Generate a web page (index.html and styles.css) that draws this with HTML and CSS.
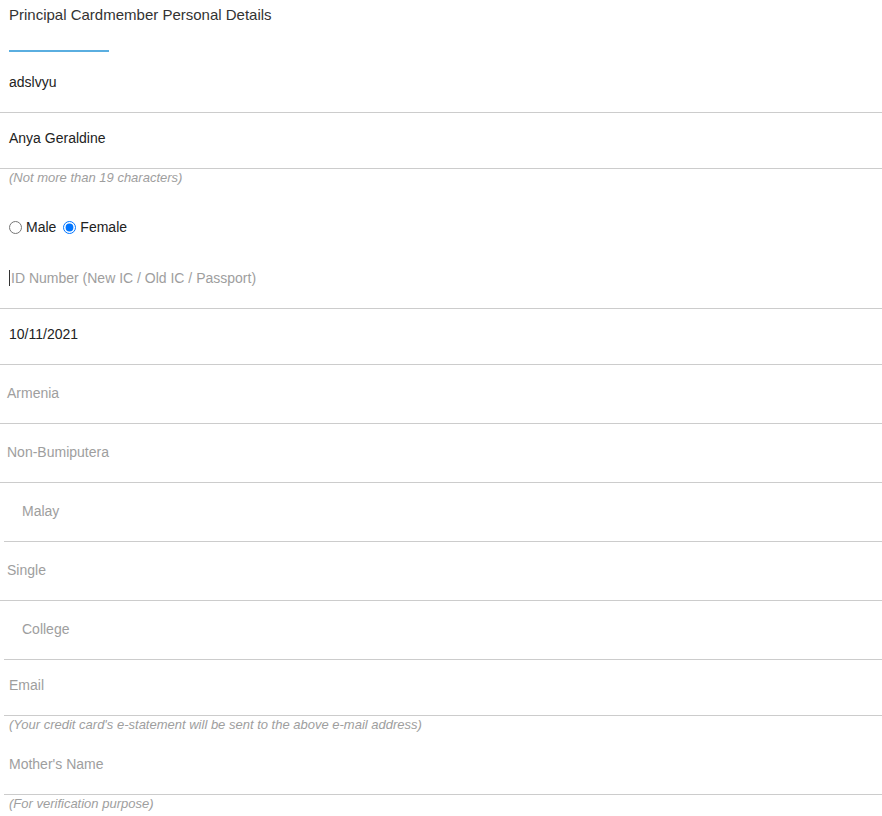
FILE: index.html
```html
<!DOCTYPE html>
<html lang="en">
<head>
    <meta charset="UTF-8">
    <meta name="viewport" content="width=device-width, initial-scale=1.0">
    <title>Principal Cardmember Personal Details</title>
    <link rel="stylesheet" href="styles.css">
</head>
<body>
    <form class="details-form">
        <div class="section-title">Principal Cardmember Personal Details</div>
        <div class="title-bar"></div>

        <div class="field"><span class="value">adslvyu</span></div>
        <div class="field"><span class="value">Anya Geraldine</span></div>
        <div class="hint">(Not more than 19 characters)</div>

        <div class="gender-row">
            <label class="radio-label"><input type="radio" name="gender" value="m"> Male</label>
            <label class="radio-label"><input type="radio" name="gender" value="f" checked> Female</label>
        </div>

        <div class="field"><span class="caret"></span><span class="placeholder">ID Number (New IC / Old IC / Passport)</span></div>
        <div class="field"><span class="value">10/11/2021</span></div>

        <div class="field select-field"><span class="placeholder">Armenia</span></div>
        <div class="field select-field"><span class="placeholder">Non-Bumiputera</span></div>
        <div class="field select-field indented"><span class="placeholder">Malay</span></div>
        <div class="field select-field"><span class="placeholder">Single</span></div>
        <div class="field select-field indented"><span class="placeholder">College</span></div>

        <div class="field inset"><span class="placeholder">Email</span></div>
        <div class="hint">(Your credit card's e-statement will be sent to the above e-mail address)</div>

        <div class="field inset spaced"><span class="placeholder">Mother's Name</span></div>
        <div class="hint">(For verification purpose)</div>
    </form>
</body>
</html>
```

FILE: styles.css
```css
body {
    margin: 0;
    font-family: "Liberation Sans", Arial, sans-serif;
    font-size: 14px;
    color: #333;
    background-color: #fff;
}
.details-form {
    display: flex;
    flex-direction: column;
}
.section-title {
    padding: 6px 9px 0;
    font-size: 15px;
    line-height: 18px;
    color: #333;
}
.title-bar {
    width: 100px;
    height: 2px;
    margin: 26px 0 5px 9px;
    background-color: #5aaee0;
}
.field {
    display: flex;
    align-items: center;
    height: 56px;
    padding: 16px 9px 22px;
    box-sizing: border-box;
    line-height: 18px;
    border-bottom: 1px solid #ccc;
}
.value {
    color: #222;
}
.placeholder {
    color: #9e9e9e;
}
.caret {
    width: 1px;
    height: 16px;
    margin-right: 1px;
    background-color: #333;
}
.select-field {
    height: 59px;
    padding: 19px 7px 22px;
}
.select-field.indented {
    margin-left: 4px;
    padding-left: 18px;
}
.inset {
    margin-left: 4px;
    padding-left: 5px;
}
.spaced {
    margin-top: 5px;
}
.hint {
    padding-left: 9px;
    font-size: 13px;
    font-style: italic;
    line-height: 18px;
    color: #9e9e9e;
}
.gender-row {
    display: flex;
    align-items: center;
    gap: 6px;
    height: 20px;
    margin: 30px 0 16px 8px;
}
.radio-label {
    display: flex;
    align-items: center;
    color: #222;
}
.radio-label input {
    width: 13px;
    height: 13px;
    margin: 0 4px 0 1px;
}
```
